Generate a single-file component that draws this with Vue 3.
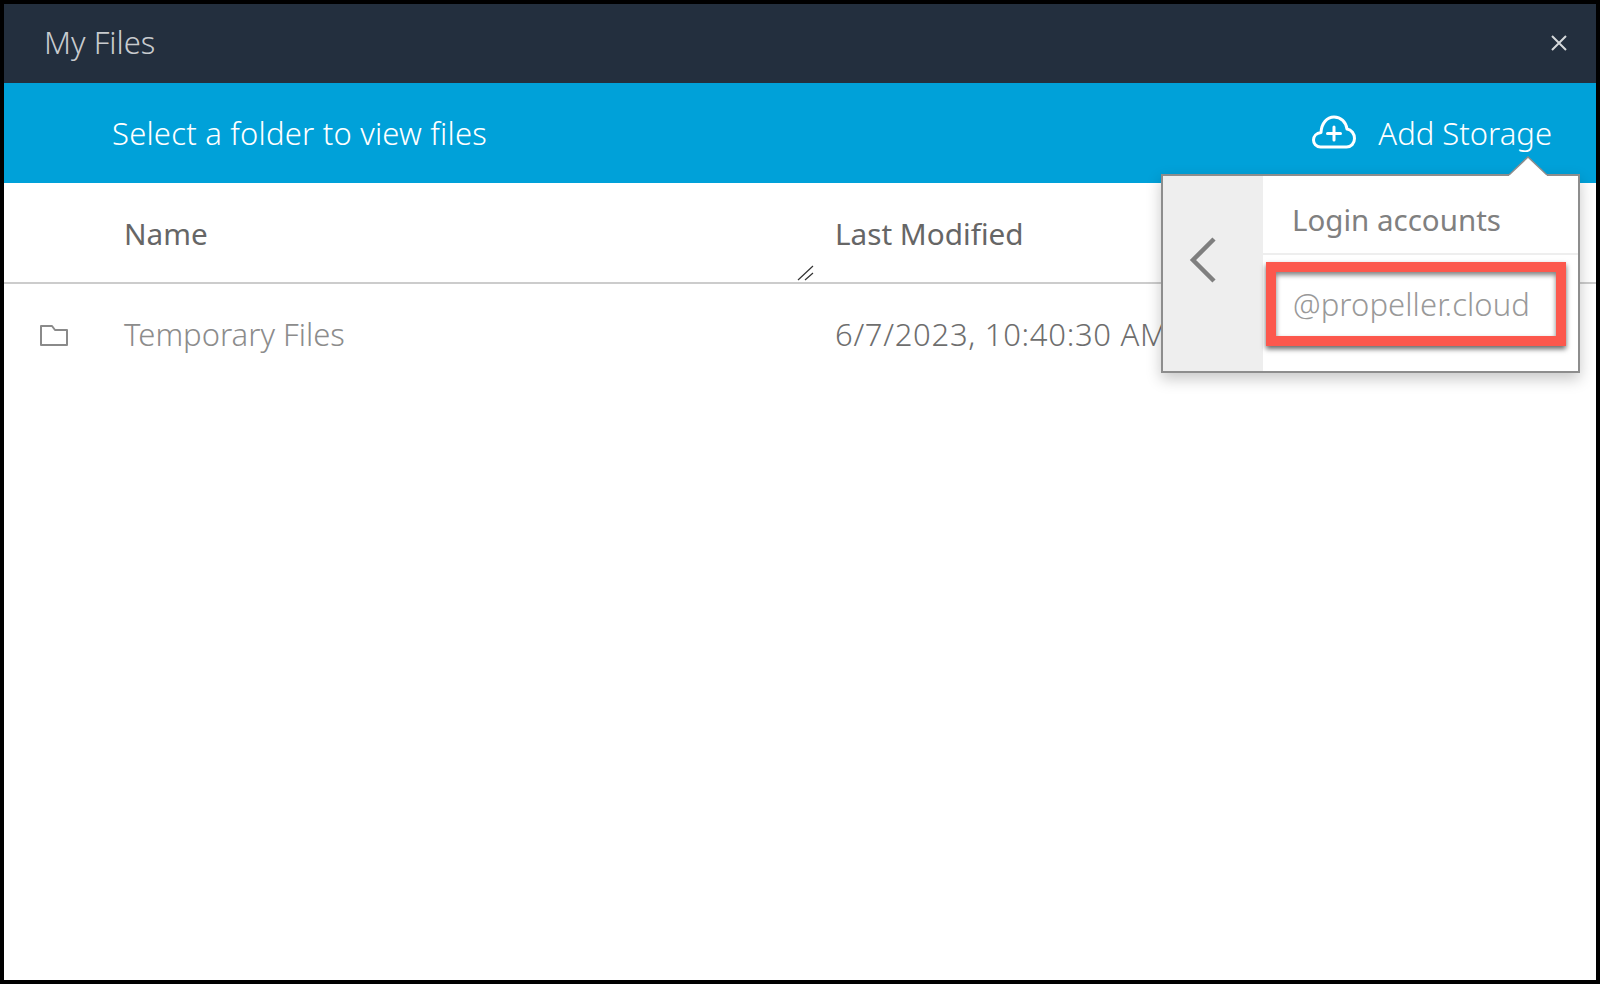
<script setup>
const rows = [{ name: 'Temporary Files', modified: '6/7/2023, 10:40:30 AM' }]
</script>

<template>
  <div class="frame">
    <div class="window">
      <header class="titlebar">
        <span class="title">My Files</span>
        <svg class="close" width="16" height="16" viewBox="0 0 16 16"><path d="M1 1 L15 15 M15 1 L1 15" stroke="#d5d8da" stroke-width="2" fill="none"/></svg>
      </header>
      <div class="toolbar">
        <span class="hint">Select a folder to view files</span>
        <div class="add">
          <svg class="cloud" width="44" height="34" viewBox="0 0 44 34" fill="none" stroke="#fff" stroke-width="3" stroke-linejoin="round" stroke-linecap="round">
            <path d="M8.500 32 C4 32 1.500 28.500 1.500 25 C1.500 21 4.500 18 9 17.500 C9.500 8 15 2 22 2 C29 2 34 7 35 14 C39.500 14.500 42.500 19 42.500 23.500 C42.500 28.500 39 32 34.500 32 Z"/>
            <path d="M22 12 V25 M15.500 18.500 H28.500"/>
          </svg>
          <span>Add Storage</span>
        </div>
      </div>
      <div class="table">
        <div class="row head">
          <span class="cell-icon"></span>
          <span class="cell-name">Name<svg class="grip" width="18" height="16" viewBox="0 0 18 16"><path d="M1 15 L16 1 M8 15 L16 8" stroke="#333" stroke-width="1.200" fill="none"/></svg></span>
          <span class="cell-date">Last Modified</span>
        </div>
        <div v-for="r in rows" :key="r.name" class="row item">
          <span class="cell-icon">
            <svg width="30" height="24" viewBox="0 0 30 24" fill="none" stroke="#8a8a8a" stroke-width="2" stroke-linejoin="round"><path d="M2 3 H13 L16 7 H28 V22 H2 Z"/></svg>
          </span>
          <span class="cell-name">{{ r.name }}</span>
          <span class="cell-date">{{ r.modified }}</span>
        </div>
      </div>

      <div class="popup">
        <div class="back">
          <svg width="28" height="46" viewBox="0 0 28 46" fill="none" stroke="#7f7f7f" stroke-width="4.500"><path d="M25 2 L4 23 L25 44"/></svg>
        </div>
        <div class="accounts">
          <div class="accounts-title">Login accounts</div>
          <div class="account"><span>@propeller.cloud</span></div>
        </div>
        <svg class="arrow" width="40" height="22" viewBox="0 0 40 22"><path d="M1 19 L20 1 L39 19 V22 H1 Z" fill="#fff"/><path d="M1 19 L20 1 L39 19" fill="none" stroke="#8d8d8d" stroke-width="1.500"/></svg>
        <span class="highlight"></span>
      </div>
    </div>
  </div>
</template>

<style>
html, body { margin: 0; background: #000; }
</style>

<style scoped>
.frame {
  width: 1600px;
  height: 984px;
  box-sizing: border-box;
  border: 4px solid #000;
  background: #fff;
  font-family: "Noto Sans", "Open Sans", sans-serif;
  font-weight: 300;
  overflow: hidden;
}
.window { position: relative; height: 100%; }
.titlebar {
  height: 79px;
  background: #232f3e;
  display: flex;
  align-items: center;
  justify-content: space-between;
  padding: 0 29px 2px 40px;
  box-sizing: border-box;
  color: #c8cbce;
  font-size: 31px;
}
.title { padding-bottom: 2px; }
.toolbar {
  height: 100px;
  background: #00a1d9;
  display: flex;
  align-items: center;
  justify-content: space-between;
  padding: 0 44px 0 108px;
  color: #fff;
  font-size: 31px;
}
.hint { letter-spacing: 0.200px; }
.add { display: flex; align-items: center; gap: 22px; }
.cloud { margin-top: -3px; }
.row { display: flex; align-items: center; }
.head {
  height: 99px;
  box-sizing: content-box;
  border-bottom: 2px solid #ccc;
  color: #666;
  font-size: 29.700px;
  font-weight: 400;
}
.item { height: 101px; color: #8c8c8c; font-size: 31px; }
.cell-icon { width: 120px; flex: none; padding-left: 35px; box-sizing: border-box; display: flex; }
.cell-name { width: 711px; flex: none; position: relative; align-self: stretch; display: flex; align-items: center; box-sizing: border-box; }
.cell-date { flex: 1; white-space: nowrap; }
.head .cell-name, .head .cell-date { padding-top: 2px; }
.item .cell-name, .item .cell-date { padding-bottom: 2px; }
.item .cell-date { color: #6e6e6e; letter-spacing: 0.700px; }
.grip { position: absolute; right: 20px; bottom: 1px; }
.popup {
  position: absolute;
  left: 1157px;
  top: 170px;
  width: 419px;
  height: 199px;
  box-sizing: border-box;
  border: 2px solid #8d8d8d;
  background: #fff;
  display: flex;
  box-shadow: 0 6px 14px rgba(0,0,0,.22);
}
.back {
  width: 100px;
  flex: none;
  background: #eee;
  display: flex;
  justify-content: flex-start;
  padding: 61px 0 0 26px;
  box-sizing: border-box;
}
.accounts { flex: 1; }
.accounts-title {
  height: 79px;
  box-sizing: border-box;
  padding-left: 29px;
  line-height: 88px;
  font-size: 29.500px;
  font-weight: 400;
  color: #808080;
  border-bottom: 2px solid #eee;
}
.account {
  padding: 29px 0 0 30px;
  font-size: 31px;
  letter-spacing: 0.100px;
  color: #999;
  line-height: 40px;
}
.arrow {
  position: absolute;
  left: 345px;
  top: -20px;
}
.highlight {
  position: absolute;
  left: 103px;
  top: 86px;
  width: 300px;
  height: 84px;
  box-sizing: border-box;
  border: 10px solid #fc584d;
  box-shadow: 0 3px 5px rgba(0,0,0,.6), inset 0 3px 5px rgba(0,0,0,.5);
}
</style>
